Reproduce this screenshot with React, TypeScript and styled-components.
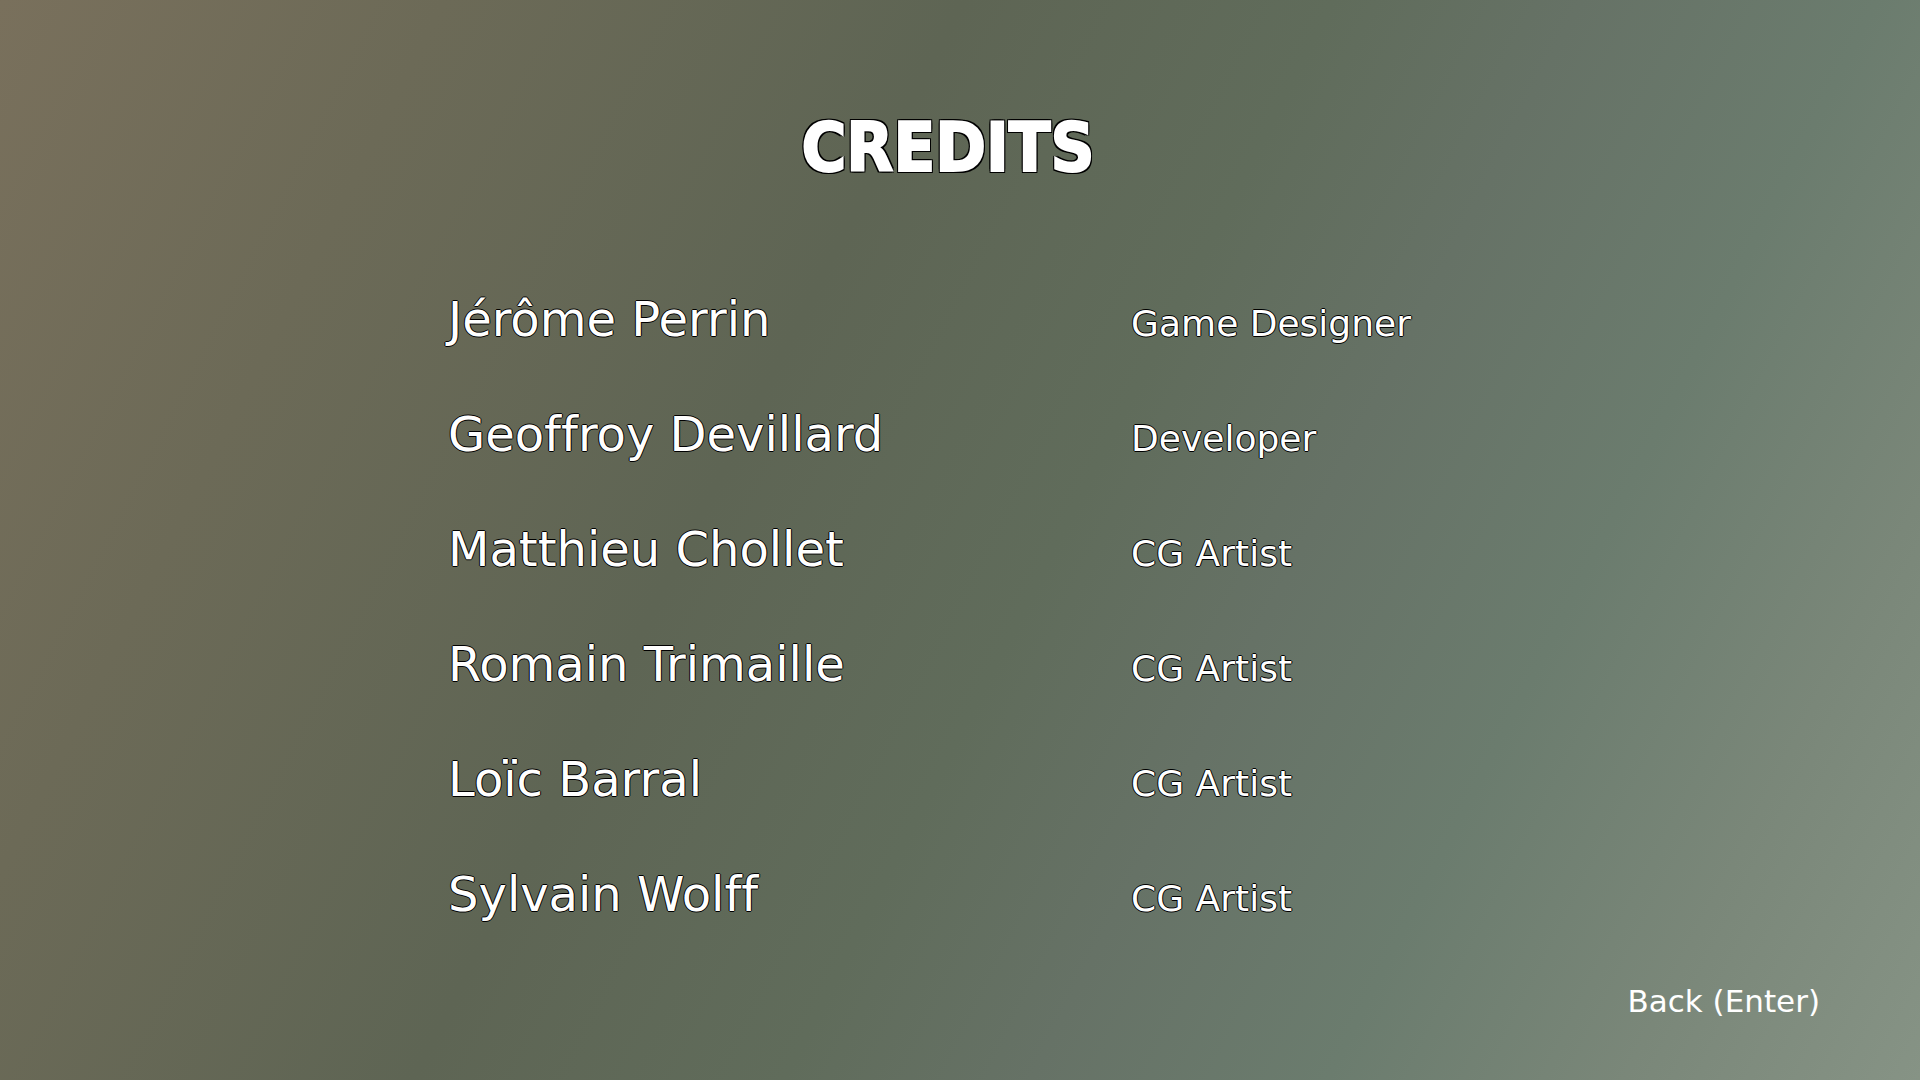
import React from "react";
import styled, { createGlobalStyle } from "styled-components";

const GlobalStyle = createGlobalStyle`
  * { box-sizing: border-box; }
  body { margin: 0; }
`;

const outline = `
  text-shadow:
    0 -1px 0 #000, -1px 0 0 #000, 1px 0 0 #000, 0 1px 0 #000;
`;

const Screen = styled.main`
  display: flex;
  flex-direction: column;
  align-items: center;
  min-height: 100vh;
  padding: 104px 100px 60px;
  color: #fff;
  font-family: Verdana, "DejaVu Sans", sans-serif;
  font-variant-ligatures: none;
  background: linear-gradient(
    117deg,
    #79705c 0%,
    #6c6a57 18%,
    #5e6554 39%,
    #606c5b 54%,
    #667266 64%,
    #6b7c6e 76%,
    #7a8779 88%,
    #869385 100%
  );
`;

const Title = styled.h1`
  margin: 0;
  padding-right: 24px;
  font-family: "DejaVu Sans Condensed", "DejaVu Sans", sans-serif;
  font-size: 68px;
  font-weight: 700;
  line-height: 88px;
  text-transform: uppercase;
  -webkit-text-stroke: 2px #fff;
  text-shadow:
    -2px -2px 0 #000, 0 -2px 0 #000, 2px -2px 0 #000,
    -2px 0 0 #000, 2px 0 0 #000,
    -2px 2px 0 #000, 0 2px 0 #000, 2px 2px 0 #000;
`;

const CreditsTable = styled.table`
  width: 60%;
  margin-top: 99px;
  margin-left: 8px;
  border-collapse: collapse;
  table-layout: fixed;
  ${outline}
`;

const Row = styled.tr`
  height: 115px;
`;

const Name = styled.th`
  width: 66%;
  padding: 0;
  font-size: 48px;
  font-weight: 400;
  text-align: left;
  vertical-align: baseline;
`;

const Role = styled.td`
  padding: 0 2px;
  font-size: 36px;
  vertical-align: baseline;
  white-space: nowrap;
`;

const BackButton = styled.button`
  margin-top: auto;
  align-self: flex-end;
  padding: 0;
  border: 0;
  background: none;
  color: #fff;
  font-family: inherit;
  font-size: 31px;
  line-height: 38px;
  cursor: pointer;
`;

const credits = [
  { name: "Jérôme Perrin", role: "Game Designer" },
  { name: "Geoffroy Devillard", role: "Developer" },
  { name: "Matthieu Chollet", role: "CG Artist" },
  { name: "Romain Trimaille", role: "CG Artist" },
  { name: "Loïc Barral", role: "CG Artist" },
  { name: "Sylvain Wolff", role: "CG Artist" },
];

export default function App() {
  return (
    <Screen>
      <GlobalStyle />
      <Title>Credits</Title>
      <CreditsTable>
        <tbody>
          {credits.map(({ name, role }) => (
            <Row key={name}>
              <Name scope="row">{name}</Name>
              <Role>{role}</Role>
            </Row>
          ))}
        </tbody>
      </CreditsTable>
      <BackButton type="button">Back (Enter)</BackButton>
    </Screen>
  );
}
